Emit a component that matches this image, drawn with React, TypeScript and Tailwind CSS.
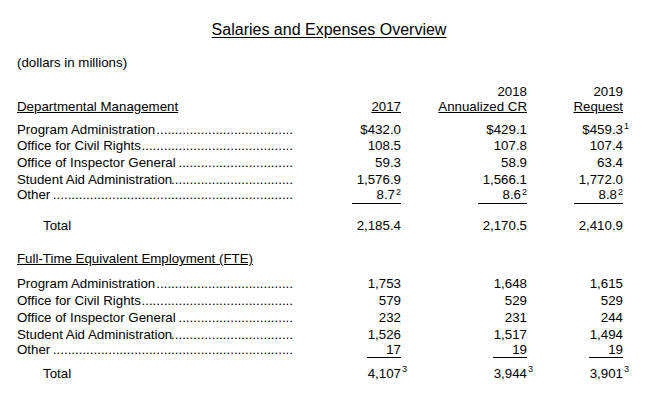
import React from 'react';

type Cell = { v: string; sup?: string; hang?: boolean };

interface Line {
  label: string;
  dots: number;
  values: Cell[];
}

const COLS = 'grid grid-cols-[276px_108px_126px_96px]';

const dollars: Line[] = [
  { label: 'Program Administration', dots: 37, values: [{ v: '$432.0' }, { v: '$429.1' }, { v: '$459.3', sup: '1', hang: true }] },
  { label: 'Office for Civil Rights', dots: 41, values: [{ v: '108.5' }, { v: '107.8' }, { v: '107.4' }] },
  { label: 'Office of Inspector General\u00a0', dots: 31, values: [{ v: '59.3' }, { v: '58.9' }, { v: '63.4' }] },
  { label: 'Student Aid Administration', dots: 33, values: [{ v: '1,576.9' }, { v: '1,566.1' }, { v: '1,772.0' }] },
];
const dollarsOther: Cell[] = [{ v: '8.7', sup: '2' }, { v: '8.6', sup: '2' }, { v: '8.8', sup: '2' }];
const dollarsTotal: Cell[] = [{ v: '2,185.4' }, { v: '2,170.5' }, { v: '2,410.9' }];

const fte: Line[] = [
  { label: 'Program Administration', dots: 37, values: [{ v: '1,753' }, { v: '1,648' }, { v: '1,615' }] },
  { label: 'Office for Civil Rights', dots: 41, values: [{ v: '579' }, { v: '529' }, { v: '529' }] },
  { label: 'Office of Inspector General\u00a0', dots: 31, values: [{ v: '232' }, { v: '231' }, { v: '244' }] },
  { label: 'Student Aid Administration', dots: 33, values: [{ v: '1,526' }, { v: '1,517' }, { v: '1,494' }] },
];
const fteOther: Cell[] = [{ v: '17' }, { v: '19' }, { v: '19' }];
const fteTotal: Cell[] = [
  { v: '4,107', sup: '3', hang: true },
  { v: '3,944', sup: '3', hang: true },
  { v: '3,901', sup: '3', hang: true },
];

const Val: React.FC<{ c: Cell }> = ({ c }) => (
  <span className="relative">
    {c.v}
    {c.sup && !c.hang && <span className="relative top-[-4px] text-[9px] ml-[1px]">{c.sup}</span>}
    {c.sup && c.hang && (
      <span className="absolute left-full top-[-1px] text-[9px] leading-[10px] ml-[1px]">{c.sup}</span>
    )}
  </span>
);

// label followed by a dot leader that ends at the column edge
const Leader: React.FC<{ label: string; dots: number }> = ({ label, dots }) => (
  <div className="flex whitespace-nowrap">
    <span className="shrink-0">{label}</span>
    <span dir="rtl" className="flex-1 min-w-0 overflow-hidden whitespace-nowrap">
      {'.'.repeat(dots)}
    </span>
  </div>
);

const Row: React.FC<{ line: Line; lead: string }> = ({ line, lead }) => (
  <div className={`${COLS} ${lead}`}>
    <Leader label={line.label} dots={line.dots} />
    {line.values.map((c, i) => (
      <div key={i} className="flex justify-end">
        <Val c={c} />
      </div>
    ))}
  </div>
);

const OtherRow: React.FC<{ values: Cell[]; lineW: string }> = ({ values, lineW }) => (
  <div className={`${COLS} leading-[14px]`}>
    <Leader label={'Other\u00a0'} dots={65} />
    {values.map((c, i) => (
      <div key={i} className="flex justify-end">
        <div className={`${lineW} text-right border-b border-black`}>
          <Val c={c} />
        </div>
      </div>
    ))}
  </div>
);

const TotalRow: React.FC<{ values: Cell[]; className: string }> = ({ values, className }) => (
  <div className={`${COLS} leading-[17px] ${className}`}>
    <div className="pl-[26px]">Total</div>
    {values.map((c, i) => (
      <div key={i} className="flex justify-end">
        <Val c={c} />
      </div>
    ))}
  </div>
);

const App: React.FC = () => {
  return (
    <div className="w-[671px] h-[404px] bg-white text-black font-['Liberation_Sans','Arial',sans-serif] overflow-hidden">
      {/* Title */}
      <div className="w-[658px] pt-[20px] text-center text-[16px] leading-[20px]">
        <span className="underline underline-offset-[2px]">Salaries and Expenses Overview</span>
      </div>

      <div className="pl-[17px] text-[13.3px]">
        <div className="mt-[13px] leading-[20px]">(dollars in millions)</div>

        {/* Column headers */}
        <div className={`${COLS} mt-[11px] leading-[15px]`}>
          <div />
          <div />
          <div className="text-right">2018</div>
          <div className="text-right">2019</div>
        </div>
        <div className={`${COLS} leading-[15px]`}>
          <div className="underline">Departmental Management</div>
          <div className="text-right underline">2017</div>
          <div className="text-right underline">Annualized CR</div>
          <div className="text-right underline">Request</div>
        </div>

        {/* Dollars section */}
        <div className="mt-[7.5px]">
          {dollars.map(l => (
            <Row key={l.label} line={l} lead="leading-[16.7px]" />
          ))}
          <OtherRow values={dollarsOther} lineW="w-[49px]" />
        </div>
        <TotalRow values={dollarsTotal} className="mt-[13px]" />

        {/* FTE section */}
        <div className="mt-[16px] leading-[17px] underline">Full-Time Equivalent Employment (FTE)</div>
        <div className="mt-[7.5px]">
          {fte.map(l => (
            <Row key={l.label} line={l} lead="leading-[17px]" />
          ))}
          <OtherRow values={fteOther} lineW="w-[34px]" />
        </div>
        <TotalRow values={fteTotal} className="mt-[7px]" />
      </div>
    </div>
  );
};

export default App;
